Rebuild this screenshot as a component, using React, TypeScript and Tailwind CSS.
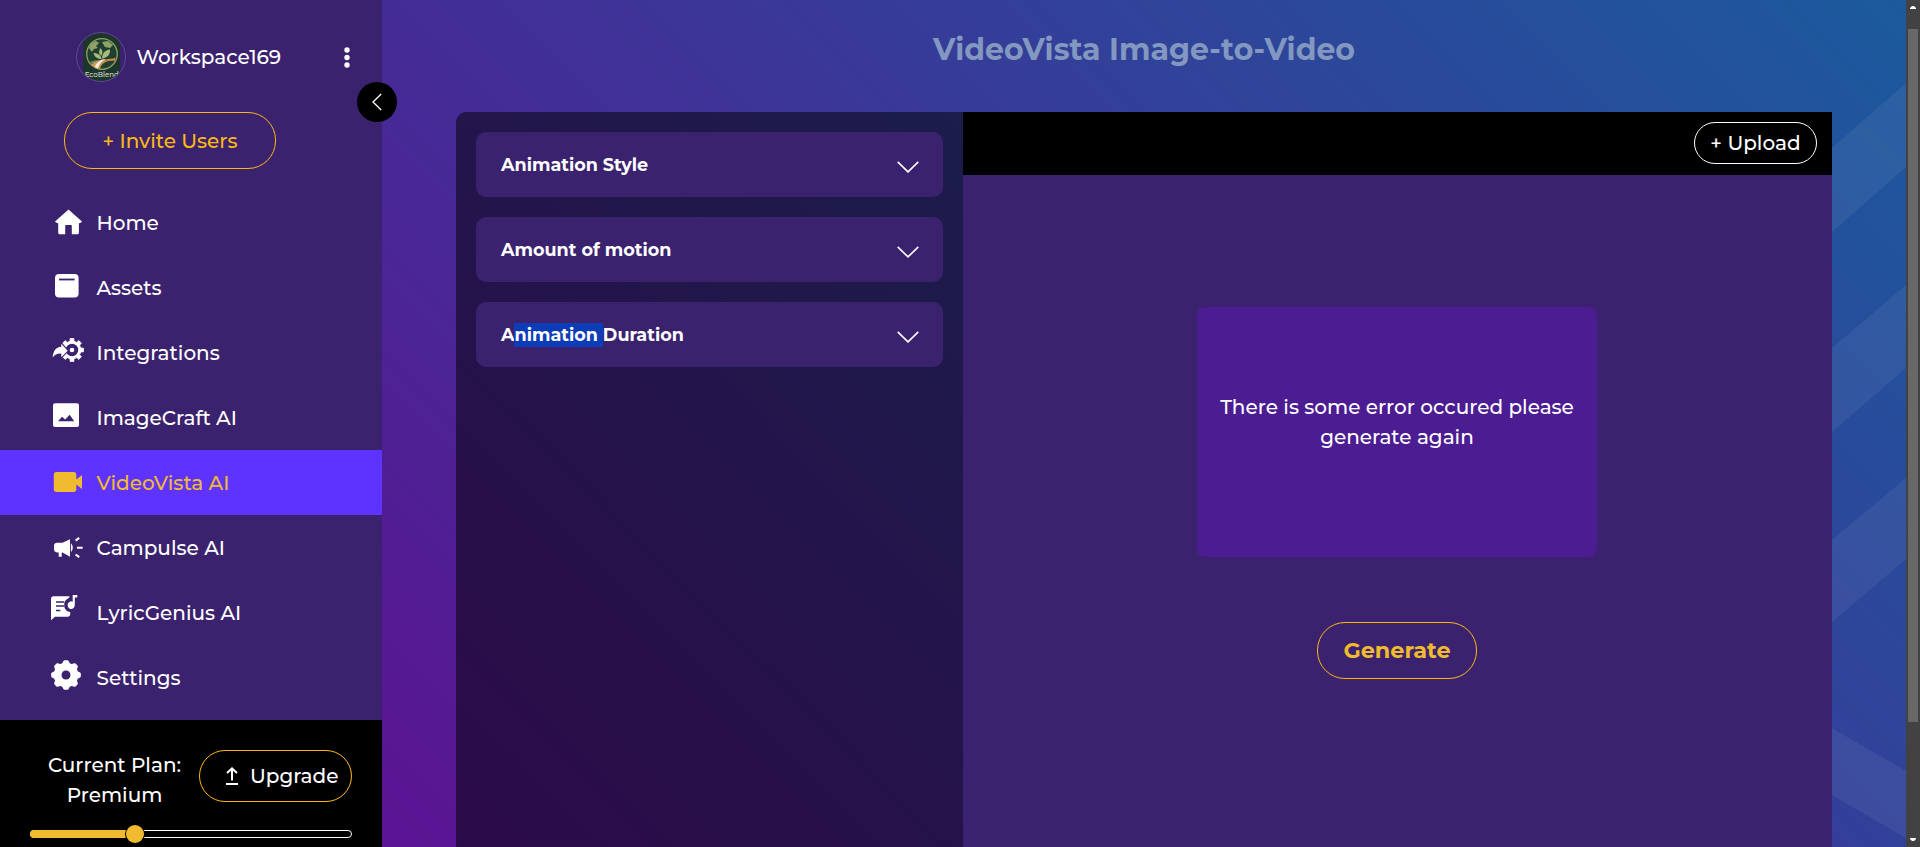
import type { ReactNode } from 'react';

const SIDEBAR = '#3b226e';

function Glyph({ children }: { children: ReactNode }) {
  return (
    <svg viewBox="0 0 40 40" className="mt-3 h-10 w-10 shrink-0" fill="currentColor">
      {children}
    </svg>
  );
}

function gearPath(cx: number, cy: number, teeth: number, outer: number, inner: number, w1: number, w2: number) {
  const pts: string[] = [];
  for (let i = 0; i < teeth; i++) {
    const a = (i * 2 * Math.PI) / teeth - Math.PI / 2;
    const at = (r: number, d: number) =>
      `${(cx + r * Math.cos(a + d)).toFixed(2)} ${(cy + r * Math.sin(a + d)).toFixed(2)}`;
    pts.push(at(inner, -w2), at(outer, -w1), at(outer, w1), at(inner, w2));
  }
  return `M${pts.join('L')}Z`;
}

const arrow = 'M2.700 25.600C3 19 6 15 11.300 14.700V11.800l6.400 7-6.400 6.400v-3.700c-4-.3-6.600 1-8.600 4.100Z';

const icons = {
  home: (
    <Glyph>
      <path d="M18.5 7.6 32 19.6c-.3.9-1.300 1.500-3.100 1.600v9.600c0 .9-.6 1.500-1.500 1.500h-5.600v-8.600c0-.5-.3-.8-.8-.8h-5c-.5 0-.8.3-.8.800v8.600H9.700c-.9 0-1.500-.6-1.500-1.500v-9.600C6.400 21.100 5.300 20.500 5 19.600Z" />
    </Glyph>
  ),
  assets: (
    <Glyph>
      <rect x="5" y="7" width="23.600" height="23.500" rx="4" />
      <rect x="9" y="11.600" width="15.600" height="1.800" fill={SIDEBAR} />
    </Glyph>
  ),
  integrations: (
    <Glyph>
      <path d={gearPath(22, 18, 8, 11.6, 9, 0.16, 0.22)} stroke="currentColor" strokeWidth="0.800" strokeLinejoin="round" />
      <circle cx="22" cy="18" r="6.200" fill={SIDEBAR} />
      <circle cx="22" cy="18" r="2.300" />
      <path d={arrow} stroke={SIDEBAR} strokeWidth="2.200" />
      <path d={arrow} />
    </Glyph>
  ),
  image: (
    <Glyph>
      <rect x="3" y="6.300" width="26" height="23.700" rx="2" />
      <path d="M8 24.300 12 19.700l3.200 2.900 4.500-4.800L24.200 24.300Z" fill={SIDEBAR} />
    </Glyph>
  ),
  video: (
    <Glyph>
      <path d="M6.200 10h17.700c1.400 0 2.400 1 2.400 2.400v5.200L32 13v14l-5.700-4.600v5.200c0 1.400-1 2.400-2.400 2.400H6.200c-1.400 0-2.400-1-2.400-2.400V12.400C3.800 11 4.800 10 6.200 10Z" />
    </Glyph>
  ),
  campaign: (
    <Glyph>
      <path d="M7 15.700h5.500L20 12.200v17.500l-7.500-4.300h-.8v4.300H8.700v-4.300H7c-1.800 0-3-1.200-3-2.800v-4.100c0-1.600 1.200-2.800 3-2.800Z" />
      <path d="M20.900 16.300c2.500 2.300 2.500 6.500 0 8.800Z" />
      <path d="m25.600 13.600 3.600-2.700M27 20.700h5.700M25.600 27.500l3.600 2.700" stroke="currentColor" strokeWidth="2.100" />
    </Glyph>
  ),
  lyric: (
    <Glyph>
      <path d="M3.500 4.300h15.200c1 0 .9.5.5 1.500-3.700 1.700-5 3.900-5 7.200 0 4 2.300 6.600 6 7.100v2c0 1.600-1 2.600-2.500 2.600H5L1 28.300V6.800c0-1.500 1-2.500 2.500-2.500Z" />
      <path d="M6 10.100h8.300M6 14.100h8M6 18.500h4.300" stroke={SIDEBAR} strokeWidth="1.500" />
      <path d="M22.700 3h4.600v2.500h-2.500v7.600a3.600 3.800 0 1 1-2.100-3.400Z" />
    </Glyph>
  ),
  settings: (
    <Glyph>
      <path
        d={gearPath(16, 18, 8, 13.5, 11, 0.1, 0.25)}
        stroke="currentColor"
        strokeWidth="2.800"
        strokeLinejoin="round"
      />
      <circle cx="16" cy="18" r="4.500" fill={SIDEBAR} />
    </Glyph>
  ),
};

const navItems: { label: string; icon: ReactNode; active?: boolean }[] = [
  { label: 'Home', icon: icons.home },
  { label: 'Assets', icon: icons.assets },
  { label: 'Integrations', icon: icons.integrations },
  { label: 'ImageCraft AI', icon: icons.image },
  { label: 'VideoVista AI', icon: icons.video, active: true },
  { label: 'Campulse AI', icon: icons.campaign },
  { label: 'LyricGenius AI', icon: icons.lyric },
  { label: 'Settings', icon: icons.settings },
];

function Avatar() {
  return (
    <svg viewBox="0 0 50 50" className="h-[50px] w-[50px] shrink-0">
      <defs>
        <clipPath id="avatar-clip">
          <circle cx="25" cy="25" r="24.300" />
        </clipPath>
      </defs>
      <g clipPath="url(#avatar-clip)">
        <rect x="7" y="0" width="37" height="50" fill="#1d352c" />
        <circle cx="26" cy="22" r="15.300" fill="#20402f" stroke="#8fa266" strokeWidth="1.300" />
        <path d="M13 16c1-4 4-6 7-7l3 2-3 3 2 2-4 1-2 3Z" fill="#8fa266" />
        <path d="m26 10 6-1 5 4-3 3-5-1Z" fill="#8fa266" />
        <path d="M25.500 27c-4 0-7-2-8-6 4 0 7.500 2 8 6Z" fill="#a9b87c" />
        <path d="M26 26.500c0-5 3-8.500 8-9 .5 5-3 8.500-8 9Z" fill="#a9b87c" />
        <path d="M25 24c-2.500-2.500-2.500-5-.5-8 2.500 3 2.500 5.500.5 8Z" fill="#a9b87c" />
        <path d="M14 30c4-2 8-2 11-1-3 1.500-5 3.500-6.500 6Z" fill="#6f8450" />
        <path d="M20 36c2-5.500 8-9.500 17-9.500l2.500-1-.6 3.500C31 28 25.500 31 24 37Z" fill="#c98647" />
        <path d="M18.500 35c1.500-4.500 6-8 11.500-8-4 2-6.500 5-8 9.500Z" fill="#f1eddb" />
        <path d="M15.500 33c2-2.500 6-4.800 10-5-4 2-6 4.500-7 7Z" fill="#d99a5a" />
        <text x="25.700" y="45.300" textAnchor="middle" fontSize="8" fontFamily="Montserrat, sans-serif" fontWeight="500" fill="#dcdfc9" textLength="34" lengthAdjust="spacingAndGlyphs">
          EcoBlend
        </text>
      </g>
      <circle cx="25" cy="25" r="24.500" fill="none" stroke="#62498f" strokeWidth="1" />
    </svg>
  );
}

function Sidebar() {
  return (
    <aside className="relative flex h-full w-[382px] shrink-0 flex-col bg-[#3b226e]">
      <div className="mt-8 flex h-[50px] items-center pl-[76px]">
        <Avatar />
        <span className="ml-[10.5px] w-[143.5px] whitespace-nowrap text-xl">Workspace169</span>
        <svg viewBox="0 0 6 21" className="ml-16 h-[21px] w-[6px]" fill="#fff">
          <circle cx="3" cy="3" r="2.700" />
          <circle cx="3" cy="10.500" r="2.700" />
          <circle cx="3" cy="18" r="2.700" />
        </svg>
      </div>
      <button className="ml-16 mt-[30px] h-[57px] w-[212px] shrink-0 rounded-[28px] border border-[#fdb913] text-xl font-medium text-[#fdb913]">
        + Invite Users
      </button>
      <nav className="mt-[21px] flex flex-col">
        {navItems.map((item) => (
          <a
            key={item.label}
            className={
              item.active
                ? 'flex h-[65px] bg-[#5f33ff] pl-[50px] text-[#f0bb2e]'
                : 'flex h-[65px] pl-[50px] text-white'
            }
          >
            {item.icon}
            <span className="ml-[6.5px] pt-px text-xl leading-[65px]">{item.label}</span>
          </a>
        ))}
      </nav>
      <div className="mt-[10px] flex flex-1 flex-col bg-black">
        <div className="flex pl-[30px] pt-[30px]">
          <p className="w-[169px] text-center text-xl leading-[30px]">
            Current Plan:
            <br />
            Premium
          </p>
          <button className="flex h-[52px] w-[153px] items-center rounded-[26px] border border-[#fdb913] pl-[26px] text-xl font-medium">
            <svg viewBox="0 0 12 18" className="mr-3 h-[18px] w-3" fill="none" stroke="#fff" strokeWidth="2">
              <path d="M6 13.500V1.500M1 6l5-4.600L11 6M0 17h12" />
            </svg>
            Upgrade
          </button>
        </div>
        <svg viewBox="0 0 322 18" className="ml-[30px] mt-[15px] h-[18px] w-[322px]">
          <rect x="0.500" y="5.500" width="321" height="7" rx="3.500" fill="#000" stroke="#fff" />
          <rect x="0" y="5" width="110" height="8" rx="4" fill="#f0bb2e" />
          <circle cx="105" cy="9" r="10" fill="#000" />
          <circle cx="105" cy="9" r="9" fill="#f0bb2e" />
        </svg>
      </div>
      <button className="absolute left-[357px] top-[82px] z-10 flex h-10 w-10 items-center justify-center rounded-full bg-black">
        <svg viewBox="0 0 40 40" className="h-10 w-10" fill="none" stroke="#fff" strokeWidth="1.300">
          <path d="m24.200 12-8.200 8 8.200 8" />
        </svg>
      </button>
    </aside>
  );
}

function AccordionCard({ children }: { children: ReactNode }) {
  return (
    <div className="flex h-[65px] items-center justify-between rounded-[10px] bg-[#3b226e] pl-[25px] pr-6">
      <span className="text-[17.6px] font-bold leading-[26px]">{children}</span>
      <svg viewBox="0 0 22 12" className="mt-[5px] h-3 w-[22px]" fill="none" stroke="#fff" strokeWidth="1.600">
        <path d="m.7.900 10.300 10L21.300.900" />
      </svg>
    </div>
  );
}

function Stripes() {
  return (
    <svg viewBox="0 0 74 847" className="absolute left-[1450px] top-0 h-[847px] w-[74px]" fill="#fff" fillOpacity="0.060">
      <path d="M0 148 74 83v84L0 232Z" />
      <path d="M0 348 74 285v83L0 432Z" />
      <path d="M0 540 74 478v81L0 622Z" />
      <path d="M0 728 74 771v67L0 795Z" />
    </svg>
  );
}

function Scrollbar() {
  return (
    <div className="flex h-full w-[14px] shrink-0 flex-col items-center justify-between bg-[#424242]">
      <svg viewBox="0 0 14 29" className="h-[29px] w-[14px]" fill="#fff">
        <path d="M4 9V8l2-2h2l2 2v1Z" />
      </svg>
      <div className="h-[693px] w-[10px] bg-[#686868]" />
      <svg viewBox="0 0 14 125" className="h-[125px] w-[14px]" fill="#fff">
        <path d="M4 116v1l2 2h2l2-2v-1Z" />
      </svg>
    </div>
  );
}

export default function App() {
  return (
    <div className="flex h-[847px] w-full overflow-hidden font-['Montserrat','Open_Sans',sans-serif] font-medium text-white">
      <Sidebar />
      <main className="relative flex h-full min-w-0 flex-1 flex-col bg-[linear-gradient(45deg,#5b1393,#1b5a9d)]">
        <Stripes />
        <h1 className="h-28 pt-[27px] text-center text-[30px] font-bold leading-[45px] text-[#8398c0]">
          VideoVista Image-to-Video
        </h1>
        <div className="relative ml-[74px] flex w-[1376px] flex-1">
          <section className="flex w-[507px] flex-col gap-5 rounded-tl-[10px] bg-black/50 p-5">
            <AccordionCard>Animation Style</AccordionCard>
            <AccordionCard>Amount of motion</AccordionCard>
            <AccordionCard>
              A<span className="bg-[#0c3cb6] pb-[2px] pt-px">nimation </span>Duration
            </AccordionCard>
          </section>
          <section className="flex flex-1 flex-col items-center bg-[#3b226e]">
            <div className="flex h-[63px] w-full justify-end bg-black pr-[15px] pt-[10px]">
              <button className="h-[42px] w-[123px] rounded-[21px] border border-white text-xl font-medium">
                + Upload
              </button>
            </div>
            <div className="mr-px mt-[132px] flex h-[250px] w-[400px] items-center justify-center rounded-lg bg-[#4c1c93] px-5 pb-5 text-center text-xl leading-[30px]">
              There is some error occured please generate again
            </div>
            <button className="mr-px mt-[65px] h-[57px] w-40 rounded-[28px] border border-[#fdb913] text-[22.4px] font-bold text-[#f0bb2e]">
              Generate
            </button>
          </section>
        </div>
      </main>
      <Scrollbar />
    </div>
  );
}
